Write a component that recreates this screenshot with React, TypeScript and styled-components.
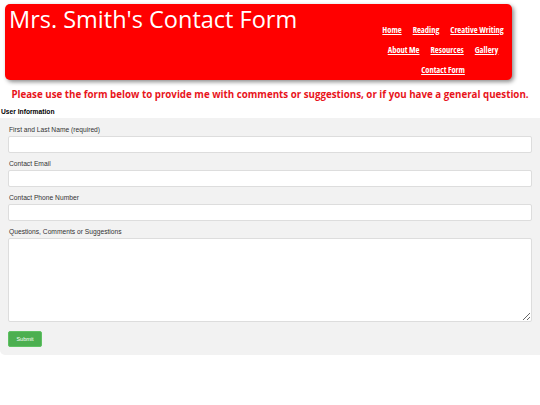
import React from 'react'
import styled, { createGlobalStyle } from 'styled-components'

const GlobalStyle = createGlobalStyle`
  html, body {
    margin: 0;
    padding: 0;
    background: #ffffff;
  }
  body {
    font-family: "Liberation Sans", Arial, sans-serif;
  }
`

const Header = styled.header`
  margin: 4px 28px 0 5px;
  height: 76px;
  background: #ff0000;
  border-radius: 5px;
  box-shadow: 2px 2px 4px rgba(0, 0, 0, 0.45);
  display: flex;
  justify-content: space-between;
  align-items: flex-start;
`

const Title = styled.h1`
  margin: 0;
  padding: 0 0 0 4px;
  font-family: "Open Sans", sans-serif;
  font-weight: 400;
  font-size: 23.5px;
  line-height: 30px;
  color: #ffffff;
  white-space: nowrap;
`

const Nav = styled.nav`
  width: 138px;
  margin: 15px 0 0 0;
  display: flex;
  flex-direction: column;
  align-items: center;
`

const NavRow = styled.div`
  display: flex;
  gap: 11px;
  height: 20px;
  align-items: center;
`

const NavLink = styled.a`
  font-family: "Open Sans", sans-serif;
  font-stretch: 75%;
  font-weight: 700;
  font-size: 8.5px;
  color: #ffffff;
  text-decoration: underline;
  white-space: nowrap;
  cursor: pointer;
`

const Notice = styled.h2`
  margin: 8px 0 0;
  text-align: center;
  font-family: "Open Sans", sans-serif;
  font-weight: 700;
  font-size: 9.75px;
  line-height: 14px;
  color: #e8141b;
  white-space: nowrap;
`

const Legend = styled.div`
  margin: 5px 0 0 1px;
  font-size: 6.7px;
  font-weight: 700;
  line-height: 10px;
  color: #000;
`

const FormPanel = styled.form`
  margin-top: 1px;
  background: #f2f2f2;
  border-radius: 0 0 0 5px;
  padding: 7px 8px 8px 8px;
  display: flex;
  flex-direction: column;
`

const Label = styled.label`
  display: block;
  font-size: 6.7px;
  line-height: 9px;
  color: #333;
  padding-left: 1px;
  margin-bottom: 2px;
`

const Field = styled.input`
  box-sizing: border-box;
  width: 100%;
  height: 17px;
  margin: 0 0 6px;
  border: 1px solid #dddddd;
  border-radius: 2px;
  background: #fff;
  padding: 2px 4px;
`

const Area = styled.textarea`
  box-sizing: border-box;
  width: 100%;
  height: 84px;
  margin: 0 0 9px;
  border: 1px solid #dddddd;
  border-radius: 2px;
  background: #fff;
  padding: 2px 4px;
  resize: vertical;
  display: block;
`

const Submit = styled.button`
  align-self: flex-start;
  width: 34px;
  height: 16px;
  padding: 0;
  border: 1px solid #5fc163;
  border-radius: 2px;
  background: #4caf50;
  color: #ffffff;
  font-family: "Liberation Sans", Arial, sans-serif;
  font-size: 5.5px;
  cursor: pointer;
`

export default function App() {
  return (
    <>
      <GlobalStyle />
      <Header>
        <Title>Mrs. Smith's Contact Form</Title>
        <Nav>
          <NavRow>
            <NavLink>Home</NavLink>
            <NavLink>Reading</NavLink>
            <NavLink>Creative Writing</NavLink>
          </NavRow>
          <NavRow>
            <NavLink>About Me</NavLink>
            <NavLink>Resources</NavLink>
            <NavLink>Gallery</NavLink>
          </NavRow>
          <NavRow>
            <NavLink>Contact Form</NavLink>
          </NavRow>
        </Nav>
      </Header>
      <Notice>Please use the form below to provide me with comments or suggestions, or if you have a general question.</Notice>
      <Legend>User Information</Legend>
      <FormPanel onSubmit={e => e.preventDefault()}>
        <Label htmlFor="name">First and Last Name (required)</Label>
        <Field id="name" type="text" />
        <Label htmlFor="email">Contact Email</Label>
        <Field id="email" type="email" />
        <Label htmlFor="phone">Contact Phone Number</Label>
        <Field id="phone" type="tel" />
        <Label htmlFor="msg">Questions, Comments or Suggestions</Label>
        <Area id="msg" />
        <Submit type="submit">Submit</Submit>
      </FormPanel>
    </>
  )
}
